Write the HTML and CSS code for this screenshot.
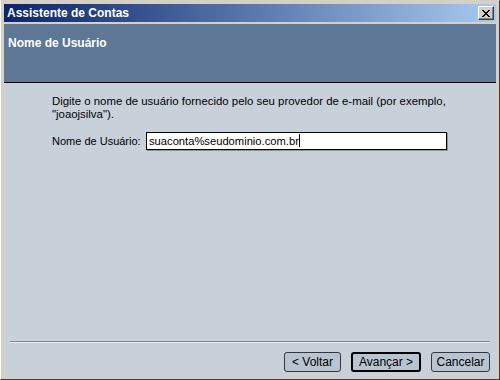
FILE: index.html
```html
<!DOCTYPE html>
<html>
<head>
    <meta charset="UTF-8">
    <title>Assistente de Contas</title>
    <link rel="stylesheet" href="styles.css">
</head>
<body>
    <div class="window">
        <div class="titlebar">
            <div class="title">Assistente de Contas</div>
            <div class="close-button">
                <svg width="10" height="9" viewBox="0 0 10 9">
                    <path d="M1 1 L8 8 M2 1 L9 8 M8 1 L1 8 M9 1 L2 8" stroke="#000" stroke-width="1"/>
                </svg>
            </div>
        </div>

        <div class="client">
            <div class="page-header">Nome de Usuário</div>

            <div class="page-body">
                <p class="description">Digite o nome de usuário fornecido pelo seu provedor de e-mail (por exemplo, "joaojsilva").</p>

                <div class="field">
                    <span class="field-label">Nome de Usuário:</span>
                    <div class="text-input">suaconta%seudominio.com.br<span class="caret"></span></div>
                </div>
            </div>

            <div class="separator"></div>

            <div class="button-row">
                <button class="wizard-button back">&lt; Voltar</button>
                <button class="wizard-button default">Avançar &gt;</button>
                <button class="wizard-button cancel">Cancelar</button>
            </div>
        </div>
    </div>
</body>
</html>
```

FILE: styles.css
```css
html, body {
    margin: 0;
    padding: 0;
    width: 500px;
    height: 380px;
    overflow: hidden;
    font-family: "Liberation Sans", Arial, sans-serif;
    font-size: 11px;
    color: #000000;
}

.window {
    box-sizing: border-box;
    width: 500px;
    height: 380px;
    background-color: #d4d0c8;
    border-top: 1px solid #d4d0c8;
    border-left: 1px solid #ffffff;
    border-right: 1px solid #404040;
    border-bottom: 1px solid #404040;
    padding: 3px 3px 3px 3px;
    display: flex;
    flex-direction: column;
}

/* Заголовок окна */
.titlebar {
    height: 18px;
    background: linear-gradient(to right, #0a246a, #a6caf0);
    display: flex;
    align-items: center;
    justify-content: space-between;
    padding: 0 2px 0 3px;
}

.title {
    color: #ffffff;
    font-weight: bold;
    font-size: 12px;
}

.close-button {
    box-sizing: border-box;
    width: 16px;
    height: 14px;
    background-color: #d4d0c8;
    border-top: 1px solid #ffffff;
    border-left: 1px solid #ffffff;
    border-right: 1px solid #404040;
    border-bottom: 1px solid #404040;
    box-shadow: inset -1px -1px 0 #808080;
    display: flex;
    align-items: center;
    justify-content: center;
}

.client {
    flex-grow: 1;
    margin-top: 2px;
    background-color: #c8d0da;
    display: flex;
    flex-direction: column;
}

.page-header {
    height: 59px;
    background-color: #5d7794;
    border-bottom: 1px solid #000000;
    color: #ffffff;
    font-weight: bold;
    font-size: 12px;
    padding: 12px 0 0 4px;
    box-sizing: border-box;
}

.page-body {
    flex-grow: 1;
    padding: 12px 40px 0 48px;
}

.description {
    margin: 0;
    line-height: 13px;
    font-size: 11.4px;
    width: 400px;
}

.field {
    display: flex;
    align-items: center;
    margin-top: 11px;
}

.field-label {
    flex-shrink: 0;
    width: 94px;
    font-size: 11px;
}

.text-input {
    box-sizing: border-box;
    flex-shrink: 0;
    width: 301px;
    height: 18px;
    background-color: #ffffff;
    border: 1px solid #000000;
    box-shadow: 1px 1px 0 #8a929c;
    padding: 1px 2px;
    line-height: 14px;
    font-size: 11.2px;
}

.caret {
    display: inline-block;
    width: 1px;
    height: 13px;
    background-color: #000000;
    vertical-align: -2px;
}

/* Разделитель над кнопками */
.separator {
    margin: 0 6px 0 6px;
    height: 1px;
    background-color: #7c8696;
    border-bottom: 1px solid #e8ecf0;
}

.button-row {
    display: flex;
    justify-content: flex-end;
    gap: 10px;
    padding: 9px 6px 4px 0;
}

.wizard-button {
    box-sizing: border-box;
    font-family: "Liberation Sans", Arial, sans-serif;
    font-size: 12px;
    height: 20px;
    padding: 0;
    width: 57px;
    background-color: #b9c4d1;
    border: 1px solid #303840;
    border-radius: 3px;
    color: #000000;
}

.wizard-button.default {
    border: 2px solid #000000;
    width: 70px;
}

.wizard-button.cancel {
    width: 59px;
}
```
